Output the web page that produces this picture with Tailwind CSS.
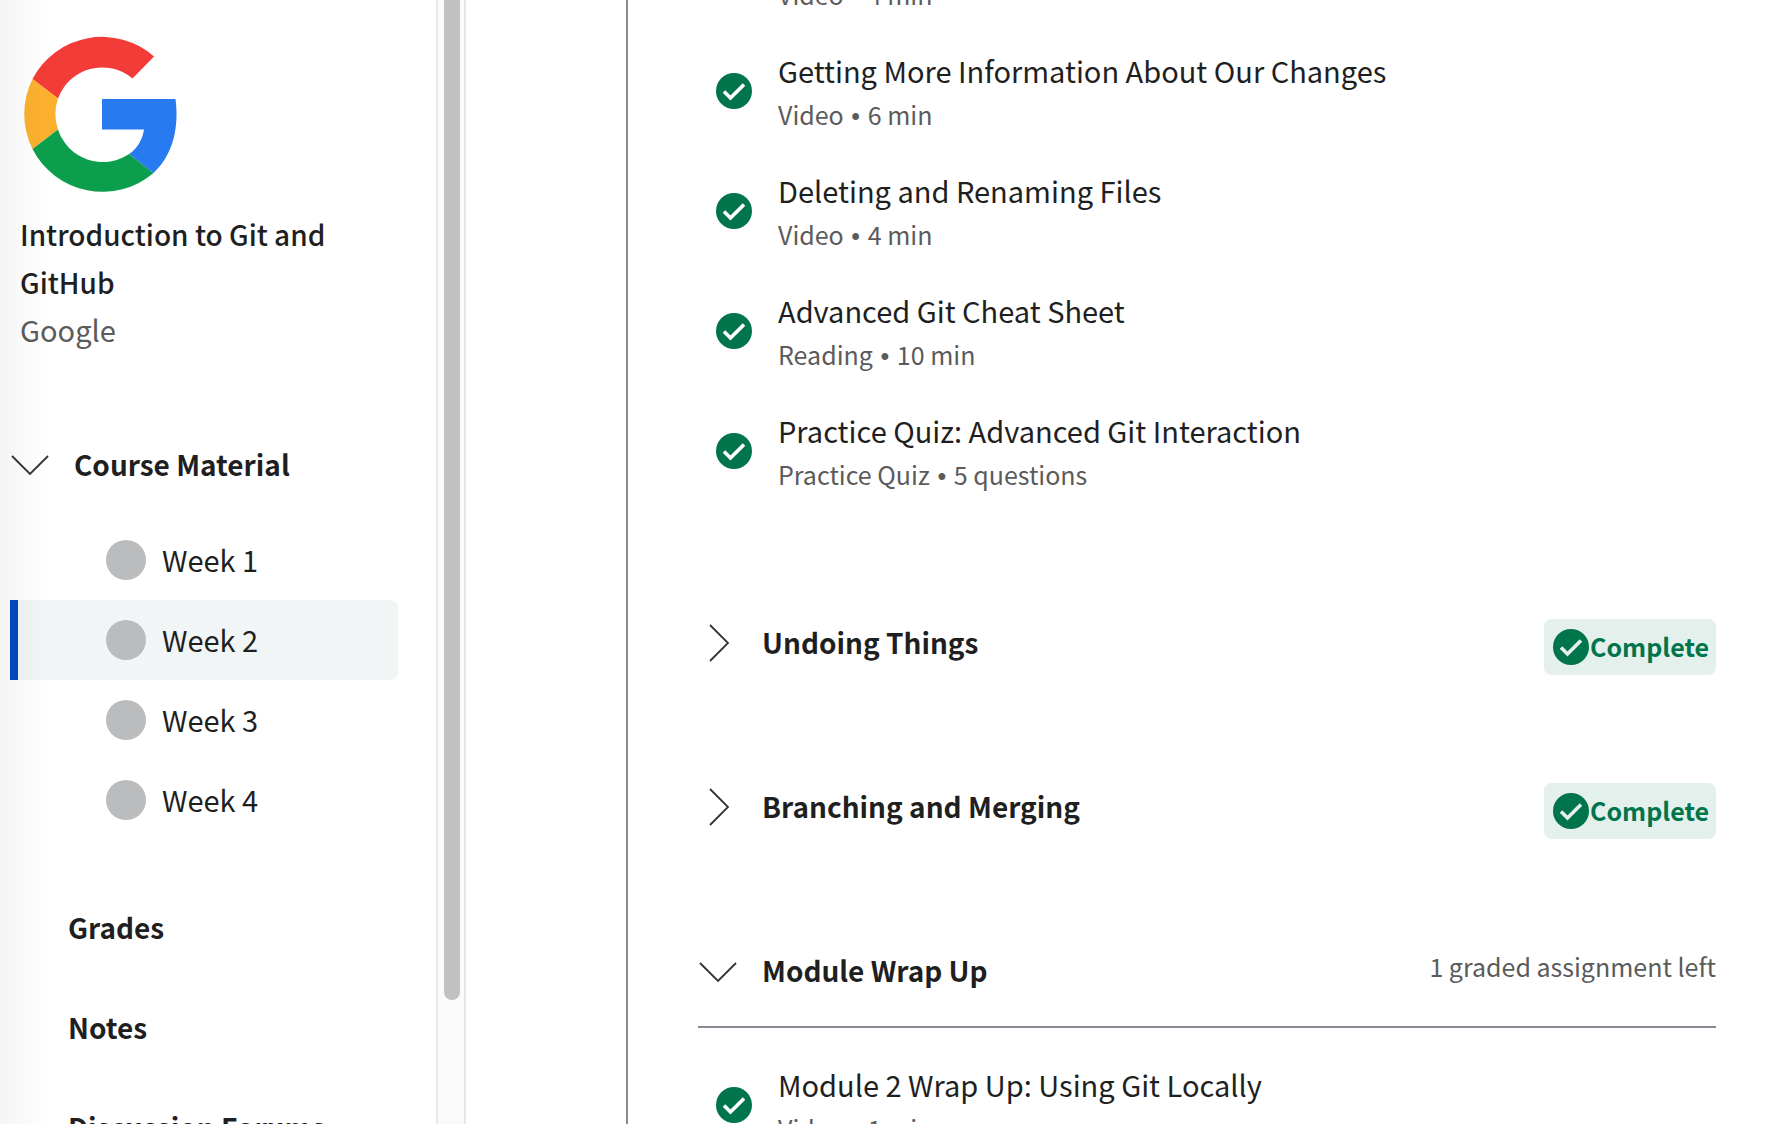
<!DOCTYPE html>
<html lang="en">
<head>
<meta charset="utf-8">
<title>Introduction to Git and GitHub</title>
<script src="https://cdn.jsdelivr.net/npm/@tailwindcss/browser@4"></script>
</head>
<body class="flex h-screen overflow-hidden bg-white font-['Noto_Sans_CJK_SC',sans-serif] text-[29px] leading-12 text-[#1f1f1f]">
<svg class="hidden">
  <symbol id="check" viewBox="0 0 36 36">
    <circle cx="18" cy="18" r="18" fill="#00744a"/>
    <path d="M8 18.500 14.500 25 28 11.500" fill="none" stroke="currentColor" stroke-width="3.600"/>
  </symbol>
  <symbol id="chevron" viewBox="0 0 40 40">
    <path d="M2 12 20 30 38 12" fill="none" stroke="#333" stroke-width="1.800"/>
  </symbol>
</svg>

<aside class="relative flex w-[466px] shrink-0">
  <div class="min-w-0 flex-1 overflow-hidden pl-[10px]">
    <header class="pl-[10px] pt-[34px]">
      <svg class="h-[160px] w-[160px]" viewBox="20 34 160 160" role="img" aria-label="Google">
        <path fill="#f33b37" d="M32.500 79A78.500 78.500 0 0 1 154 56.500L132.500 78.500A47 47 0 0 0 58 98.500Z"/>
        <path fill="#fcb12e" d="M32.500 79A78.500 78.500 0 0 0 32.500 149L58 129.500A48 48 0 0 1 58 98.500Z"/>
        <path fill="#0b9f4d" d="M32.500 149A78.500 78.500 0 0 0 153.500 173L129 154A47 47 0 0 1 58 129.500Z"/>
        <path fill="#287af0" d="M102 99H175.500C179 126 174 154 153.500 173L129 154C137 149 142.500 140 144 129.500H102Z"/>
      </svg>
      <h1 class="mt-4 w-[340px] text-[28px] leading-12 font-medium">Introduction to Git and GitHub</h1>
      <p class="-mt-px text-[#5b5b5b]">Google</p>
    </header>
    <nav class="mt-[87px]">
      <button class="flex items-center text-[28px] leading-12 font-bold"><svg class="mr-6 h-10 w-10"><use href="#chevron"/></svg>Course Material</button>
      <ul class="mr-[38px] mt-8">
        <li><a href="#" class="flex h-20 items-center gap-4 pl-24"><span class="h-10 w-10 rounded-full bg-[#bbbcbe]"></span><span class="pb-0.5">Week 1</span></a></li>
        <li><a href="#" class="flex h-20 items-center gap-4 rounded-r-lg border-l-8 border-[#0048c4] bg-[#f1f5f6] pl-22" aria-current="page"><span class="h-10 w-10 rounded-full bg-[#bbbcbe]"></span><span class="pb-0.5">Week 2</span></a></li>
        <li><a href="#" class="flex h-20 items-center gap-4 pl-24"><span class="h-10 w-10 rounded-full bg-[#bbbcbe]"></span><span class="pb-0.5">Week 3</span></a></li>
        <li><a href="#" class="flex h-20 items-center gap-4 pl-24"><span class="h-10 w-10 rounded-full bg-[#bbbcbe]"></span><span class="pb-0.5">Week 4</span></a></li>
      </ul>
      <div class="mt-[63px] flex flex-col gap-[52px] pl-[58px] text-[28px] leading-12 font-bold">
        <a href="#">Grades</a>
        <a href="#">Notes</a>
        <a href="#">Discussion Forums</a>
      </div>
    </nav>
  </div>
  <div class="w-[30px] border-x-2 border-[#e7e7e7] bg-[#fafafa] px-[6px]">
    <div class="h-[89%] w-4 rounded-b-full bg-[#c1c1c1]"></div>
  </div>
  <div class="pointer-events-none absolute inset-y-0 left-0 w-12 bg-linear-to-r from-black/4 to-transparent"></div>
</aside>

<main class="ml-40 min-w-0 flex-1 border-l-2 border-[#888b91] pl-[70px] pr-[50px]">
  <section class="-mt-[90px] pb-[54px]">
    <ul>
      <li><a href="#" class="flex items-center gap-[26px] py-4 pl-[18px]"><svg class="mt-0.5 h-9 w-9 text-white"><use href="#check"/></svg><span><span class="block">Initial Git Cheat Sheet</span><span class="block text-[25px] leading-10 text-[#5b5b5b]">Video <span class="mx-0.5 font-['Liberation_Sans',sans-serif] leading-none">•</span> 4 min</span></span></a></li>
      <li><a href="#" class="flex items-center gap-[26px] py-4 pl-[18px]"><svg class="mt-0.5 h-9 w-9 text-white"><use href="#check"/></svg><span><span class="block">Getting More Information About Our Changes</span><span class="block text-[25px] leading-10 text-[#5b5b5b]">Video <span class="mx-0.5 font-['Liberation_Sans',sans-serif] leading-none">•</span> 6 min</span></span></a></li>
      <li><a href="#" class="flex items-center gap-[26px] py-4 pl-[18px]"><svg class="mt-0.5 h-9 w-9 text-white"><use href="#check"/></svg><span><span class="block">Deleting and Renaming Files</span><span class="block text-[25px] leading-10 text-[#5b5b5b]">Video <span class="mx-0.5 font-['Liberation_Sans',sans-serif] leading-none">•</span> 4 min</span></span></a></li>
      <li><a href="#" class="flex items-center gap-[26px] py-4 pl-[18px]"><svg class="mt-0.5 h-9 w-9 text-white"><use href="#check"/></svg><span><span class="block">Advanced Git Cheat Sheet</span><span class="block text-[25px] leading-10 text-[#5b5b5b]">Reading <span class="mx-0.5 font-['Liberation_Sans',sans-serif] leading-none">•</span> 10 min</span></span></a></li>
      <li><a href="#" class="flex items-center gap-[26px] py-4 pl-[18px]"><svg class="mt-0.5 h-9 w-9 text-white"><use href="#check"/></svg><span><span class="block">Practice Quiz: Advanced Git Interaction</span><span class="block text-[25px] leading-10 text-[#5b5b5b]">Practice Quiz <span class="mx-0.5 font-['Liberation_Sans',sans-serif] leading-none">•</span> 5 questions</span></span></a></li>
    </ul>
  </section>
  <section class="flex items-start justify-between py-[54px]">
    <button class="flex items-center gap-6 text-[28px] leading-12 font-bold"><svg class="mt-0.5 h-10 w-10 -rotate-90"><use href="#chevron"/></svg>Undoing Things</button>
    <p class="mt-px -mb-px flex h-14 items-center gap-px rounded-lg bg-[#e3f0eb] pl-[9px] pr-[7px] text-[25px] font-bold text-[#00744a]"><svg class="h-9 w-9 text-[#e3f0eb]"><use href="#check"/></svg><span class="pb-0.5">Complete</span></p>
  </section>
  <section class="flex items-start justify-between py-[54px]">
    <button class="flex items-center gap-6 text-[28px] leading-12 font-bold"><svg class="mt-0.5 h-10 w-10 -rotate-90"><use href="#chevron"/></svg>Branching and Merging</button>
    <p class="mt-px -mb-px flex h-14 items-center gap-px rounded-lg bg-[#e3f0eb] pl-[9px] pr-[7px] text-[25px] font-bold text-[#00744a]"><svg class="h-9 w-9 text-[#e3f0eb]"><use href="#check"/></svg><span class="pb-0.5">Complete</span></p>
  </section>
  <section class="pt-[54px]">
    <div class="flex items-start justify-between border-b-2 border-[#888b91] pb-8">
      <button class="flex items-center gap-6 text-[28px] leading-12 font-bold"><svg class="mt-0.5 h-10 w-10"><use href="#chevron"/></svg>Module Wrap Up</button>
      <p class="text-[25px] leading-10 text-[#5b5b5b]">1 graded assignment left</p>
    </div>
    <ul class="pt-4">
      <li><a href="#" class="flex items-center gap-[26px] py-4 pl-[18px]"><svg class="mt-0.5 h-9 w-9 text-white"><use href="#check"/></svg><span><span class="block">Module 2 Wrap Up: Using Git Locally</span><span class="block text-[25px] leading-10 text-[#5b5b5b]">Video <span class="mx-0.5 font-['Liberation_Sans',sans-serif] leading-none">•</span> 1 min</span></span></a></li>
    </ul>
  </section>
</main>
</body>
</html>
